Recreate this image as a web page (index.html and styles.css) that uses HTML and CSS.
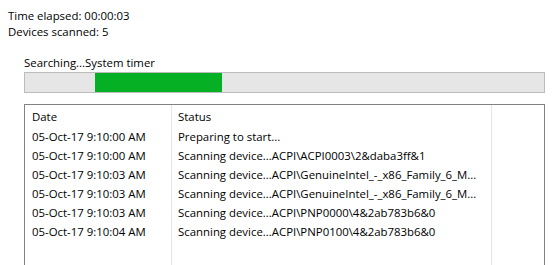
FILE: index.html
```html
<!DOCTYPE html>
<html>

<head>
  <meta charset="utf-8" />
  <title>Device scan</title>
  <link rel="stylesheet" href="styles.css">
</head>

<body>
  <div class="stats">
    <p>Time elapsed: 00:00:03</p>
    <p>Devices scanned: 5</p>
  </div>

  <div class="task">
    <p class="label">Searching...System timer</p>
    <div class="progress">
      <div class="fill"></div>
    </div>

    <div class="list">
      <div class="row head">
        <span class="date">Date</span>
        <span class="status">Status</span>
        <span class="extra"></span>
      </div>
      <div class="row">
        <span class="date">05-Oct-17 9:10:00 AM</span>
        <span class="status">Preparing to start...</span>
        <span class="extra"></span>
      </div>
      <div class="row">
        <span class="date">05-Oct-17 9:10:00 AM</span>
        <span class="status">Scanning device...ACPI\ACPI0003\2&amp;daba3ff&amp;1</span>
        <span class="extra"></span>
      </div>
      <div class="row">
        <span class="date">05-Oct-17 9:10:03 AM</span>
        <span class="status">Scanning device...ACPI\GenuineIntel_-_x86_Family_6_M...</span>
        <span class="extra"></span>
      </div>
      <div class="row">
        <span class="date">05-Oct-17 9:10:03 AM</span>
        <span class="status">Scanning device...ACPI\GenuineIntel_-_x86_Family_6_M...</span>
        <span class="extra"></span>
      </div>
      <div class="row">
        <span class="date">05-Oct-17 9:10:03 AM</span>
        <span class="status">Scanning device...ACPI\PNP0000\4&amp;2ab783b6&amp;0</span>
        <span class="extra"></span>
      </div>
      <div class="row">
        <span class="date">05-Oct-17 9:10:04 AM</span>
        <span class="status">Scanning device...ACPI\PNP0100\4&amp;2ab783b6&amp;0</span>
        <span class="extra"></span>
      </div>
      <div class="row filler">
        <span class="date"></span>
        <span class="status"></span>
        <span class="extra"></span>
      </div>
    </div>
  </div>
</body>

</html>
```

FILE: styles.css
```css
* {
  box-sizing: border-box;
}

body {
  margin: 0;
  background: #fff;
  color: #000;
  font-family: "Open Sans", "Noto Sans", sans-serif;
  font-size: 11.4px;
  overflow: hidden;
}

p {
  margin: 0;
}

.stats {
  padding: 8px 8px 0;
  line-height: 16px;
}

.task {
  margin: 15px 0 0 24px;
  width: 521px;
}

.task .label {
  line-height: 16px;
  padding-bottom: 1px;
}

.progress {
  height: 21px;
  border: 1px solid #bcbcbc;
  background: #e6e6e6;
}

.progress .fill {
  margin-left: 70px;
  width: 127px;
  height: 100%;
  background: #06b025;
}

.list {
  margin-top: 11px;
  width: 521px;
  height: 200px;
  border: 1px solid #828282;
  display: flex;
  flex-direction: column;
}

.row {
  display: flex;
  height: 19px;
  line-height: 19px;
}

.row.head {
  height: 22px;
  line-height: 24px;
}

.row.filler {
  flex: 1;
}

.row span {
  white-space: nowrap;
  overflow: hidden;
}

.date {
  width: 147px;
  padding-left: 7px;
  border-right: 1px solid #e5e5e5;
}

.status {
  width: 320px;
  padding-left: 6px;
  border-right: 1px solid #e5e5e5;
}

.extra {
  flex: 1;
}
```
